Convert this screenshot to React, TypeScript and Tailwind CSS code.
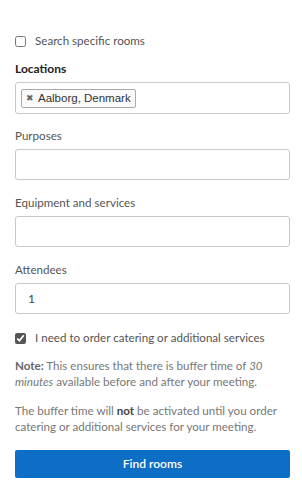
import { useState } from "react";

export default function App() {
  const [specific, setSpecific] = useState(false);
  const [catering, setCatering] = useState(true);

  const inputCls =
    "h-[31px] w-full rounded-[3px] border border-[#c8c8c8] bg-white px-3 text-[12px] text-[#444] outline-none";

  return (
    <div className="min-h-[500px] w-[302px] bg-white pl-[15px] pr-[12px] pt-[33px] font-['Lato',sans-serif] text-[11.6px] leading-[16px] text-[#555]">
      <label className="flex h-[16px] items-center gap-[9px]">
        <input
          type="checkbox"
          checked={specific}
          onChange={(e) => setSpecific(e.target.checked)}
          className="m-0 h-[11px] w-[11px] accent-[#555]"
        />
        <span>Search specific rooms</span>
      </label>

      <div className="mt-[12px] text-[12px] font-bold text-[#222]">Locations</div>
      <div className="mt-[5px] flex h-[32px] w-full items-center rounded-[3px] border border-[#c8c8c8] px-[5px]">
        <span className="flex h-[19px] items-center gap-[4px] rounded-[2px] border border-[#aaa] bg-[#fafafa] px-[4px] font-['Liberation_Sans',sans-serif] text-[11.5px] text-[#333]">
          <span className="text-[9px] text-[#666]">✖</span>
          Aalborg, Denmark
        </span>
      </div>

      <div className="mt-[14px]">Purposes</div>
      <input className={`mt-[5px] block ${inputCls}`} />

      <div className="mt-[15px]">Equipment and services</div>
      <input className={`mt-[5px] block ${inputCls}`} />

      <div className="mt-[15px]">Attendees</div>
      <input className={`mt-[5px] block ${inputCls}`} defaultValue="1" />

      <label className="mt-[16px] flex h-[16px] items-center gap-[9px]">
        <input
          type="checkbox"
          checked={catering}
          onChange={(e) => setCatering(e.target.checked)}
          className="m-0 h-[11px] w-[11px] accent-[#555]"
        />
        <span className="whitespace-nowrap">I need to order catering or additional services</span>
      </label>

      <p className="mt-[12px] text-[#777]">
        <span className="font-bold text-[#666]">Note:</span> This ensures that there is buffer time of{" "}
        <i>30 minutes</i> available before and after your meeting.
      </p>
      <p className="mt-[13px] text-[#777]">
        The buffer time will <b className="text-[#444]">not</b> be activated until you order catering or
        additional services for your meeting.
      </p>

      <button className="mt-[15px] block h-[28px] w-full rounded-[2px] bg-[#0e6dc4] text-[12px] font-semibold text-white">
        Find rooms
      </button>
    </div>
  );
}
